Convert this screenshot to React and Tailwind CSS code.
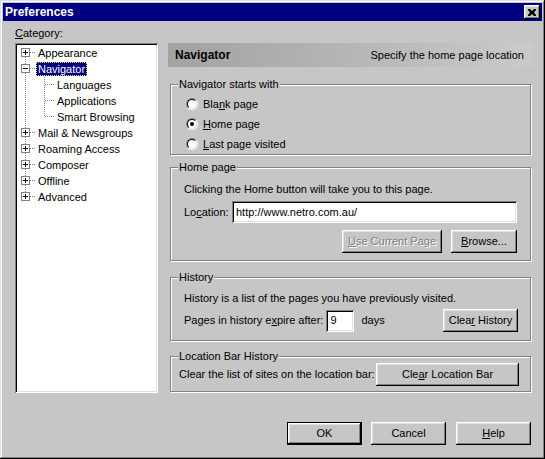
import React from 'react';

const raised = 'shadow-[inset_-1px_-1px_#000,inset_1px_1px_#fff,inset_-2px_-2px_#808080,inset_2px_2px_#dfdfdf]';
const sunken = 'shadow-[inset_1px_1px_#808080,inset_-1px_-1px_#fff,inset_2px_2px_#000,inset_-2px_-2px_#dfdfdf]';

function Btn({ children, className = '', isDefault, disabled }) {
  if (isDefault) {
    return (
      <div className={`border border-black ${className}`}>
        <div className={`h-full w-full flex items-center justify-center ${raised}`}>
          <span>{children}</span>
        </div>
      </div>
    );
  }
  return (
    <div
      className={`flex items-center justify-center ${raised} ${disabled ? 'text-[#808080] [text-shadow:1px_1px_#fff]' : ''} ${className}`}
    >
      <span>{children}</span>
    </div>
  );
}

function Radio({ checked, children }) {
  return (
    <div className="flex items-center h-[20px] pl-[8px]">
      <div className="w-[12px] h-[12px] rounded-full border border-t-[#808080] border-l-[#808080] border-r-white border-b-white">
        <div className="w-full h-full rounded-full border border-t-black border-l-black border-r-[#dfdfdf] border-b-[#dfdfdf] bg-white flex items-center justify-center">
          {checked && <div className="w-[4px] h-[4px] rounded-full bg-black" />}
        </div>
      </div>
      <span className="ml-[5px]">{children}</span>
    </div>
  );
}

function Group({ title, className = '', children }) {
  return (
    <fieldset className={`border border-[#808080] shadow-[inset_1px_1px_#fff,1px_1px_#fff] pl-[7px] ml-[2px] mr-[1px] ${className}`}>
      <legend className="px-[1px] leading-[14px] bg-[#c6c6c6]">{title}</legend>
      {children}
    </fieldset>
  );
}

function TreeRow({ label, child, first, last, expanded, selected }) {
  if (child) {
    return (
      <div className="flex items-center h-[16px]">
        <svg width="39" height="16" className="shrink-0">
          <line x1="8.5" y1="0" x2="8.5" y2="16" stroke="#808080" strokeDasharray="1 1" />
          <line x1="27.5" y1="0" x2="27.5" y2={last ? 8 : 16} stroke="#808080" strokeDasharray="1 1" />
          <line x1="28" y1="7.5" x2="38" y2="7.5" stroke="#808080" strokeDasharray="1 1" />
        </svg>
        <span className="leading-[14px] px-[1px]">{label}</span>
      </div>
    );
  }
  return (
    <div className="flex items-center h-[16px]">
      <svg width="19" height="16" className="shrink-0">
        <line x1="8.5" y1={first ? 8 : 0} x2="8.5" y2={last ? 8 : 16} stroke="#808080" strokeDasharray="1 1" />
        <line x1="13" y1="7.5" x2="19" y2="7.5" stroke="#808080" strokeDasharray="1 1" />
        <rect x="4.5" y="3.5" width="8" height="8" fill="#fff" stroke="#808080" />
        <line x1="6" y1="7.5" x2="11" y2="7.5" stroke="#000" />
        {!expanded && <line x1="8.5" y1="5" x2="8.5" y2="10" stroke="#000" />}
      </svg>
      <span
        className={`leading-[12px] px-[1px] border border-dotted ${
          selected ? 'bg-[#000080] text-white border-[#e0e060]' : 'border-transparent'
        }`}
      >
        {label}
      </span>
    </div>
  );
}

const tree = [
  { label: 'Appearance', first: true },
  { label: 'Navigator', expanded: true, selected: true },
  { label: 'Languages', child: true },
  { label: 'Applications', child: true },
  { label: 'Smart Browsing', child: true, last: true },
  { label: 'Mail & Newsgroups' },
  { label: 'Roaming Access' },
  { label: 'Composer' },
  { label: 'Offline' },
  { label: 'Advanced', last: true },
];

export default function App() {
  return (
    <div className="w-[545px] h-[459px] bg-[#c6c6c6] p-[3px] flex flex-col text-[11px] text-black font-['Liberation_Sans',Arial,sans-serif] shadow-[inset_-1px_-1px_#000,inset_1px_1px_#dfdfdf,inset_-2px_-2px_#808080,inset_2px_2px_#fff]">
      {/* title bar */}
      <div className="h-[18px] bg-[#000080] flex items-center justify-between pl-[2px] pr-[2px]">
        <span className="text-white font-bold text-[12px]">Preferences</span>
        <div className={`w-[16px] h-[14px] bg-[#c6c6c6] flex items-center justify-center ${raised}`}>
          <svg width="8" height="7" viewBox="0 0 8 7">
            <path d="M0 0h2l2 2 2-2h2v1L6 3.5 8 6v1H6L4 5 2 7H0V6l2-2.5L0 1z" fill="#000" />
          </svg>
        </div>
      </div>

      <div className="flex-1 flex flex-col pl-[12px] pr-[10px]">
        <div className="flex">
          {/* category tree */}
          <div className="w-[143px] flex flex-col">
            <div className="h-[22px] pt-[6px] leading-[13px]">
              <span className="underline">C</span>ategory:
            </div>
            <div className={`h-[350px] bg-white pt-[2px] pl-[2px] ${sunken}`}>
              {tree.map((t) => (
                <TreeRow key={t.label} {...t} />
              ))}
            </div>
          </div>

          {/* right panel */}
          <div className="w-[364px] ml-[10px] pt-[22px] flex flex-col">
            <div className="h-[24px] flex items-center justify-between pl-[7px] pr-[8px] bg-linear-to-r from-[#a2a2a2] to-[#cacaca]">
              <span className="font-bold text-[12px]">Navigator</span>
              <span>Specify the home page location</span>
            </div>

            <Group title="Navigator starts with" className="mt-[10px]">
              <div className="pt-[3px]">
                <Radio>
                  Bla<span className="underline">n</span>k page
                </Radio>
                <Radio checked>
                  <span className="underline">H</span>ome page
                </Radio>
                <Radio>
                  <span className="underline">L</span>ast page visited
                </Radio>
              </div>
            </Group>

            <Group title="Home page" className="mt-[5px]">
              <div className="pt-[8px] pl-[6px] pr-[13px] pb-[7px]">
                <div className="leading-[14px]">Clicking the Home button will take you to this page.</div>
                <div className="flex items-center mt-[5px] h-[22px]">
                  <span className="w-[48px]">
                    Lo<span className="underline">c</span>ation:
                  </span>
                  <div className={`flex-1 h-[22px] bg-white flex items-center pl-[4px] ${sunken}`}>
                    http://www.netro.com.au/
                  </div>
                </div>
                <div className="flex justify-end gap-[9px] mt-[7px]">
                  <Btn disabled className="w-[100px] h-[23px]">
                    <span className="underline">U</span>se Current Page
                  </Btn>
                  <Btn className="w-[66px] h-[23px]">
                    <span className="underline">B</span>rowse...
                  </Btn>
                </div>
              </div>
            </Group>

            <Group title="History" className="mt-[9px]">
              <div className="pt-[7px] pl-[6px] pr-[12px] pb-[8px]">
                <div className="leading-[14px]">History is a list of the pages you have previously visited.</div>
                <div className="flex items-center mt-[4px] h-[23px]">
                  <span>
                    Pages in history e<span className="underline">x</span>pire after:
                  </span>
                  <div className={`ml-[3px] w-[28px] h-[22px] bg-white flex items-center pl-[4px] ${sunken}`}>9</div>
                  <span className="ml-[7px]">days</span>
                  <Btn className="ml-auto w-[75px] h-[23px]">
                    Clea<span className="underline">r</span> History
                  </Btn>
                </div>
              </div>
            </Group>

            <Group title="Location Bar History" className="mt-[8px]">
              <div className="pl-[1px] pr-[11px] pb-[5px] flex items-center h-[28px]">
                <span>Clear the list of sites on the location bar:</span>
                <Btn className="ml-auto w-[143px] h-[23px]">
                  Cle<span className="underline">a</span>r Location Bar
                </Btn>
              </div>
            </Group>
          </div>
        </div>

        {/* footer buttons */}
        <div className="mt-auto mb-[11px] flex justify-end pr-[1px]">
          <Btn isDefault className="w-[75px] h-[23px]">OK</Btn>
          <Btn className="ml-[9px] w-[75px] h-[23px]">Cancel</Btn>
          <Btn className="ml-[10px] w-[75px] h-[23px]">
            <span className="underline">H</span>elp
          </Btn>
        </div>
      </div>
    </div>
  );
}
